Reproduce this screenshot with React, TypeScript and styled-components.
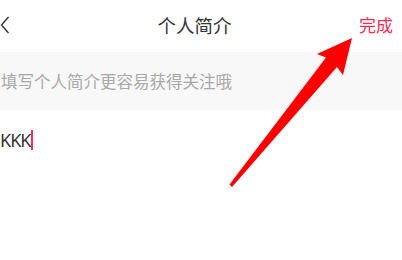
import React from "react";
import styled, { createGlobalStyle } from "styled-components";

const Global = createGlobalStyle`
  html, body {
    margin: 0;
    padding: 0;
    background: #fff;
    font-family: "Noto Sans CJK SC", "Noto Sans", sans-serif;
  }
`;

const App = () => {
  return (
    <Page>
      <Global />
      <Header>
        <Back>
          <svg width="10" height="18" viewBox="0 0 10 18">
            <path d="M8.5 1 L1.5 9 L8.5 17" fill="none" stroke="#333" strokeWidth="1.4" />
          </svg>
        </Back>
        <Title>个人简介</Title>
        <Done>完成</Done>
      </Header>
      <Hint>填写个人简介更容易获得关注哦</Hint>
      <Editor>
        <Typed>KKK</Typed>
        <Caret />
      </Editor>
      <Arrow width="402" height="260" viewBox="0 0 402 260">
        <polygon
          points="352,38 317,54 326,57.5 229.5,184.5 232,187 337,67 343,75"
          fill="#ff0000"
        />
      </Arrow>
    </Page>
  );
};

export default App;

const Page = styled.div`
  position: relative;
  width: 402px;
  height: 260px;
  overflow: hidden;
  background: #fff;
`;

const Header = styled.div`
  height: 52px;
  display: flex;
  align-items: center;
  justify-content: space-between;
  padding: 0 9px 0 0;
  position: relative;
`;

const Back = styled.div`
  width: 12px;
  display: flex;
  align-items: center;
  margin-top: -2px;
`;

const Title = styled.div`
  position: absolute;
  left: 0;
  right: 0;
  top: 0;
  bottom: 0;
  display: flex;
  align-items: center;
  justify-content: center;
  font-size: 18.5px;
  color: #333;
  margin-top: -2px;
  padding-right: 13px;
  pointer-events: none;
`;

const Done = styled.div`
  font-size: 17px;
  color: #fe2c55;
  margin-top: -4px;
`;

const Hint = styled.div`
  height: 58px;
  background: #f8f8f8;
  display: flex;
  align-items: center;
  padding-left: 1px;
  font-size: 16.5px;
  color: #a8a8a8;
  box-sizing: border-box;
`;

const Editor = styled.div`
  display: flex;
  align-items: center;
  padding-top: 20px;
`;

const Typed = styled.span`
  font-family: "Liberation Sans Narrow", "Noto Sans", sans-serif;
  font-size: 18px;
  color: #333;
  letter-spacing: -1px;
  line-height: 20px;
`;

const Caret = styled.span`
  width: 2px;
  height: 20px;
  background: #fe2c55;
  margin-left: 1px;
`;

const Arrow = styled.svg`
  position: absolute;
  left: 0;
  top: 0;
  pointer-events: none;
`;
